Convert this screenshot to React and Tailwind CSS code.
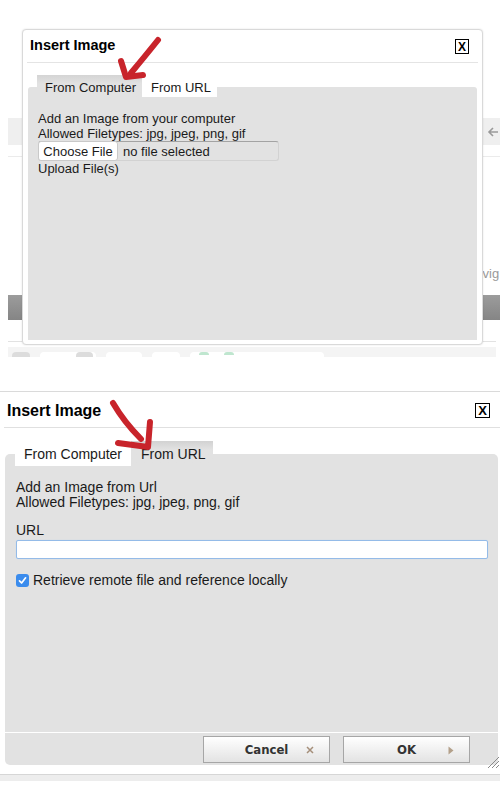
import React from 'react';

const RedArrowTop = () => (
  <svg
    className="absolute left-[110px] top-[30px] w-[60px] h-[56px] pointer-events-none"
    viewBox="110 30 60 56"
  >
    <path d="M158 40 C 150 50, 141 61, 131 73" stroke="#c8242b" strokeWidth="6" fill="none" strokeLinecap="round" />
    <path d="M121 61 L 126 77 L 143 75" stroke="#c8242b" strokeWidth="6" fill="none" strokeLinecap="round" strokeLinejoin="round" />
  </svg>
);

const RedArrowBottom = () => (
  <svg
    className="absolute left-[106px] top-[396px] w-[52px] h-[58px] pointer-events-none"
    viewBox="106 396 52 58"
  >
    <path d="M113 403 C 120 415, 130 428, 141 439" stroke="#c8242b" strokeWidth="6" fill="none" strokeLinecap="round" />
    <path d="M150 422 L 148 447 L 118 443" stroke="#c8242b" strokeWidth="6" fill="none" strokeLinecap="round" strokeLinejoin="round" />
  </svg>
);

const CloseBox = ({ small }) => (
  <div
    className={
      small
        ? 'w-[14px] h-[15px] border border-black flex items-center justify-center text-[12px] font-bold leading-none text-black'
        : 'w-[15px] h-[15px] border border-black flex items-center justify-center text-[13px] font-bold leading-none text-black'
    }
  >
    X
  </div>
);

// the page that sits behind the first dialog
const BackgroundPage = () => (
  <div className="pl-2 pt-[118px]">
    <div className="h-[27px] bg-[#efefef] flex items-center justify-end pr-[1px]">
      <svg width="12" height="12" viewBox="0 0 12 12">
        <path d="M11 6 H3 M6 2 L2 6 L6 10" stroke="#9a9a9a" strokeWidth="1.6" fill="none" />
      </svg>
    </div>
    <div className="h-[11px]" />
    <div className="h-px bg-[#ebebeb]" />
    <div className="h-[109px]" />
    <div className="h-[15px] leading-[15px] text-[13px] text-[#9a9a9a] pl-[458px] whitespace-nowrap">Navig</div>
    <div className="h-[14px]" />
    <div className="h-[25px] bg-gradient-to-b from-[#9c9c9c] to-[#858585]" />
    <div className="h-[22px] mr-1 border-b border-[#e2e2e2]" />
    <div className="h-[5px]" />
    <div className="h-[10px] mr-1 bg-[#f4f4f4] flex items-end gap-[10px] pl-1">
      <div className="w-[18px] h-[5px] rounded-t-[4px] bg-[#dcdcdc]" />
      <div className="w-[56px] h-[5px] rounded-t-[4px] bg-white flex justify-end pr-[3px]">
        <div className="w-[17px] h-[5px] rounded-t-[4px] bg-[#dcdcdc]" />
      </div>
      <div className="w-[36px] h-[5px] rounded-t-[4px] bg-white" />
      <div className="w-[28px] h-[5px] rounded-t-[4px] bg-white" />
      <div className="w-[134px] h-[5px] rounded-t-[4px] bg-white flex gap-[15px] pl-[9px]">
        <div className="w-[10px] h-[3px] rounded-t bg-[#bfe6cf]" />
        <div className="w-[10px] h-[3px] rounded-t bg-[#bfe6cf]" />
      </div>
    </div>
  </div>
);

const FirstDialog = () => (
  <div className="absolute left-[22px] top-[29px] w-[461px] h-[316px] rounded-[4px] border border-[#d9d9d9] bg-white shadow-[0_0_2px_rgba(0,0,0,0.12)] flex flex-col">
    <div className="h-[32px] flex items-start justify-between pl-[7px] pr-[13px] pt-[5px]">
      <span className="text-[14.5px] font-bold text-black">Insert Image</span>
      <div className="mt-[4px]">
        <CloseBox small />
      </div>
    </div>
    <div className="h-px bg-[#e4e4e4] mx-1" />
    <div className="mx-[5px] mt-[24px] mb-[4px] flex-1 rounded-t-[3px] bg-[#e2e2e2] flex flex-col">
      <div className="-mt-[12px] h-[22px] flex pl-[9px] text-[13px] leading-[15px]">
        <div className="w-[105px] bg-gradient-to-b from-[#d4d4d4] to-[#e2e2e2] to-[40%] pl-[8px] pt-[5px] text-[#1a1a1a]">
          From Computer
        </div>
        <div className="w-[75px] bg-white pl-[9px] pt-[5px] text-[#1a1a1a]">From URL</div>
      </div>
      <div className="pl-[10px] pt-[14px] text-[13px] leading-[15px] text-[#1a1a1a]">
        <div>Add an Image from your computer</div>
        <div>Allowed Filetypes: jpg, jpeg, png, gif</div>
        <div className="w-[241px] h-[20px] rounded-[3px] border border-[#d2d2d2] border-t-[#a3a3a3] flex items-center">
          <div className="w-[80px] h-[20px] -ml-px rounded-[3px] border border-[#c9c9c9] bg-white flex items-center justify-center">
            Choose File
          </div>
          <span className="ml-[5px]">no file selected</span>
        </div>
        <div>Upload File(s)</div>
      </div>
    </div>
  </div>
);

const FooterButton = ({ label, icon }) => (
  <button className="relative w-[127px] h-[27px] border border-[#a6a6a6] bg-gradient-to-b from-white to-[#e3e3e3] flex items-center justify-center font-['DejaVu_Sans_Condensed','DejaVu_Sans',sans-serif] font-bold text-[13px] text-[#333]">
    {label}
    <span className="absolute right-[15px] top-[9px]">{icon}</span>
  </button>
);

const SecondDialog = () => (
  <div className="flex flex-col">
    <div className="h-[36px] flex items-start justify-between pl-[7px] pr-[10px] pt-[7px] border-b border-[#e0e0e0] ml-1">
      <span className="-ml-1 text-[16px] font-bold text-black">Insert Image</span>
      <div className="mt-[4px]">
        <CloseBox />
      </div>
    </div>
    <div className="ml-[5px] mr-[2px] mt-[26px] h-[278px] rounded-t-[5px] bg-[#e2e2e2] flex flex-col">
      <div className="-mt-[13px] h-[25px] flex pl-[10px] text-[14px] leading-[16px]">
        <div className="w-[116px] bg-white pl-[9px] pt-[5px] text-[#1a1a1a]">From Computer</div>
        <div className="w-[82px] bg-gradient-to-b from-[#d2d2d2] to-[#e2e2e2] to-[35%] pl-[10px] pt-[5px] text-[#1a1a1a]">
          From URL
        </div>
      </div>
      <div className="pl-[11px] pr-[9px] pt-[14px] text-[14px] leading-[15px] text-[#1a1a1a]">
        <div>Add an Image from Url</div>
        <div>Allowed Filetypes: jpg, jpeg, png, gif</div>
        <div className="mt-[13px]">URL</div>
        <div className="mt-[2px] h-[19px] w-[472px] rounded-[2px] border border-[#94bbe8] bg-white shadow-[0_0_1px_#b9d3f2]" />
        <div className="mt-[14px] flex items-center">
          <div className="w-[13px] h-[13px] rounded-[3px] bg-[#3b8ced] flex items-center justify-center">
            <svg width="9" height="9" viewBox="0 0 9 9">
              <path d="M1.5 4.8 L3.6 7 L7.6 1.8" stroke="white" strokeWidth="1.7" fill="none" strokeLinecap="round" strokeLinejoin="round" />
            </svg>
          </div>
          <span className="ml-[4px]">Retrieve remote file and reference locally</span>
        </div>
      </div>
    </div>
    <div className="h-px" />
    <div className="relative ml-[5px] mr-[2px] h-[32px] rounded-b-[5px] bg-[#e2e2e2] flex justify-end gap-[13px] pr-[28px] pt-[3px]">
      <FooterButton
        label="Cancel"
        icon={
          <svg width="8" height="8" viewBox="0 0 8 8">
            <path d="M1 1 L7 7 M7 1 L1 7" stroke="#a58f7a" strokeWidth="1.5" />
          </svg>
        }
      />
      <FooterButton
        label="OK"
        icon={
          <svg width="6" height="9" viewBox="0 0 6 9">
            <path d="M0.5 0.5 L5.5 4.5 L0.5 8.5 Z" fill="#b3a08a" />
          </svg>
        }
      />
      <svg className="absolute -right-[2px] top-[22px]" width="14" height="14" viewBox="0 0 14 14">
        <path d="M13 2 L2 13 M13 6 L6 13 M13 10 L10 13" stroke="#8a8a8a" strokeWidth="1" />
      </svg>
    </div>
    <div className="h-[9px]" />
    <div className="h-px bg-[#d6d6d6]" />
    <div className="h-[6px] bg-[#ededed]" />
  </div>
);

export default function App() {
  return (
    <div className="relative w-[500px] h-[800px] bg-white overflow-hidden font-['Liberation_Sans',Arial,sans-serif]">
      <div className="relative h-[392px] border-b border-[#dadada]">
        <BackgroundPage />
        <FirstDialog />
      </div>
      <SecondDialog />
      <RedArrowTop />
      <RedArrowBottom />
    </div>
  );
}
